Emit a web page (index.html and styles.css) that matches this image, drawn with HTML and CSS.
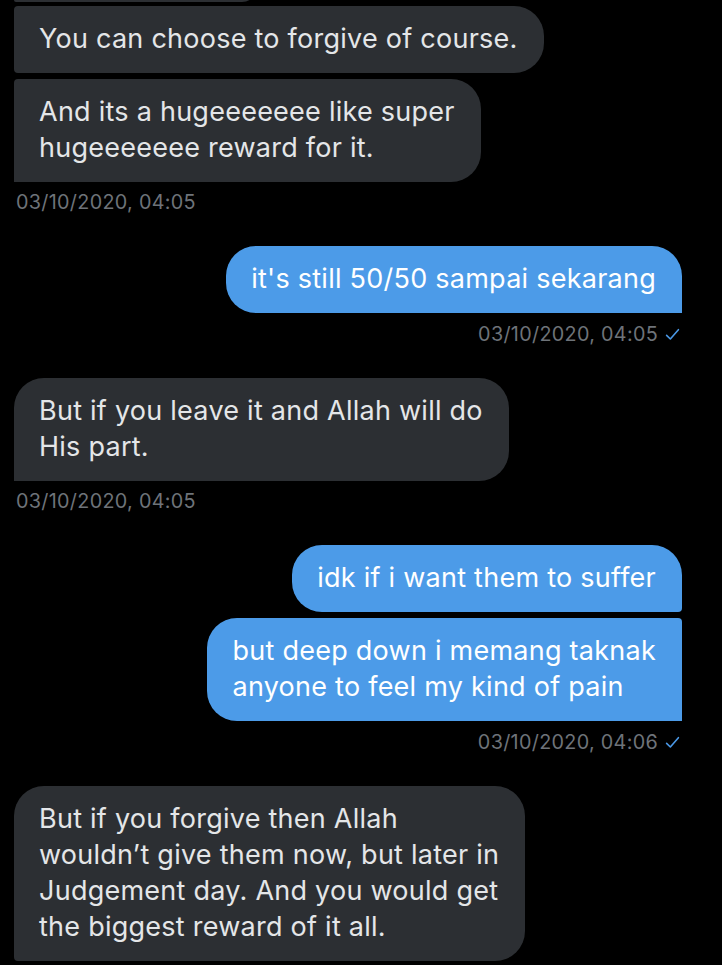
FILE: index.html
```html
<!DOCTYPE html>
<html>
<head>
<meta charset="utf-8">
<link rel="stylesheet" href="styles.css">
</head>
<body>
<div class="chat">
  <div class="msg in prev-tail"><div class="bubble in-mid-end"></div></div>
  <div class="msg in"><div class="bubble in-mid">You can choose to forgive of course.</div></div>
  <div class="msg in gap-s"><div class="bubble in-last">And its a hugeeeeeee like super<br>hugeeeeeee reward for it.</div></div>
  <div class="ts ts-in">03/10/2020, 04:05</div>

  <div class="msg out gap-l"><div class="bubble out-last">it's still 50/50 sampai sekarang</div></div>
  <div class="ts ts-out">03/10/2020, 04:05 <svg class="check" viewBox="0 0 14 14" width="15" height="15"><path d="M1.5 7.8 L5 11.2 L12.5 2.5" fill="none" stroke="#4a98e6" stroke-width="1.5" stroke-linecap="round" stroke-linejoin="round"/></svg></div>

  <div class="msg in gap-l"><div class="bubble in-first-last">But if you leave it and Allah will do<br>His part.</div></div>
  <div class="ts ts-in">03/10/2020, 04:05</div>

  <div class="msg out gap-l"><div class="bubble out-first">idk if i want them to suffer</div></div>
  <div class="msg out gap-s"><div class="bubble out-last-grp">but deep down i memang taknak<br>anyone to feel my kind of pain</div></div>
  <div class="ts ts-out">03/10/2020, 04:06 <svg class="check" viewBox="0 0 14 14" width="15" height="15"><path d="M1.5 7.8 L5 11.2 L12.5 2.5" fill="none" stroke="#4a98e6" stroke-width="1.5" stroke-linecap="round" stroke-linejoin="round"/></svg></div>

  <div class="msg in gap-l"><div class="bubble in-first">But if you forgive then Allah<br>wouldn’t give them now, but later in<br>Judgement day. And you would get<br>the biggest reward of it all.</div></div>
  <div class="msg in gap-s"><div class="bubble in-mid">&nbsp;</div></div>
</div>
</body>
</html>
```
FILE: styles.css
```css
html, body {
  margin: 0;
  padding: 0;
  background: #000;
  height: 965px;
  overflow: hidden;
}
.chat {
  display: flex;
  flex-direction: column;
  padding: 0 40px 0 14px;
  font-family: Inter, "Noto Sans", sans-serif;
}
.msg {
  display: flex;
}
.msg.in { justify-content: flex-start; margin-top: 4px; }
.msg.out { justify-content: flex-end; }
.msg.gap-s { margin-top: 6px; }
.msg.gap-l { margin-top: 34px; }
.prev-tail { margin-top: -28px !important; }
.prev-tail .bubble { width: 243px; height: 30px; padding: 0; box-sizing: border-box; }

.bubble {
  font-size: 27px;
  line-height: 36px;
  letter-spacing: 0.25px;
  padding: 15px 26px 16px 25px;
  color: #e4e6e8;
  background: #2c2f33;
  border-radius: 30px;
}
.in-mid-end { border-radius: 4px 30px 30px 4px; }
.in-mid { border-radius: 4px 30px 30px 4px; }
.in-last { border-radius: 4px 30px 30px 0; }
.in-first-last { border-radius: 30px 30px 30px 0; }
.in-first { border-radius: 30px 30px 30px 4px; }

.out-last, .out-first, .out-last-grp {
  background: #4c9be8;
  color: #fff;
}
.out-last { border-radius: 30px 30px 0 30px; }
.out-first { border-radius: 30px 30px 4px 30px; }
.out-last-grp { border-radius: 30px 4px 0 30px; }

.ts {
  font-size: 19.8px;
  line-height: 20px;
  letter-spacing: 0.3px;
  color: #6e7379;
  margin-top: 10px;
}
.ts-in { padding-left: 2px; }
.ts-out {
  display: flex;
  justify-content: flex-end;
  align-items: center;
  gap: 7px;
  margin-right: 2px;
  margin-top: 11px;
}
.check { display: block; }
```
